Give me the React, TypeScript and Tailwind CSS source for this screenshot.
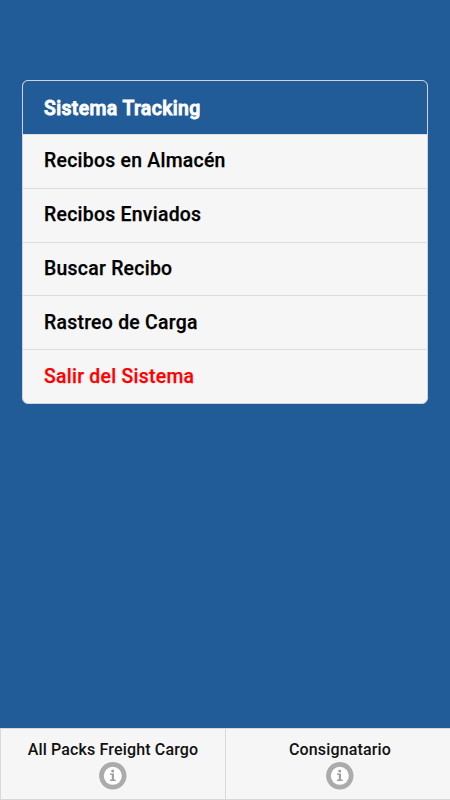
import clsx from "clsx";

const items = [
  { label: "Recibos en Almacén" },
  { label: "Recibos Enviados" },
  { label: "Buscar Recibo" },
  { label: "Rastreo de Carga" },
  { label: "Salir del Sistema", danger: true },
];

const tabs = ["All Packs Freight Cargo", "Consignatario"];

function InfoIcon() {
  return (
    <svg width="28" height="28" viewBox="0 0 28 28">
      <circle cx="13.8" cy="13.8" r="13.7" fill="#ababab" />
      <circle cx="13.8" cy="13.8" r="9" fill="#fff" />
      <circle cx="13.7" cy="9.1" r="1.5" fill="#a0a0a0" />
      <path
        d="M11 11.6h4v6h1.7v1.4H11v-1.4h1.8V13H11z"
        fill="#a0a0a0"
      />
    </svg>
  );
}

export default function App() {
  return (
    <div className="flex h-screen flex-col justify-between overflow-hidden bg-[#215c99] font-[Roboto,sans-serif] text-black">
      <ul className="mx-[22px] mt-20 h-[324px] overflow-hidden rounded-[6px] border border-[#d0d3d8] bg-[#f6f6f6] text-[19.4px] font-medium tracking-[0.27px] [-webkit-text-stroke:0.25px_currentColor]">
        <li className="flex h-[53px] items-center bg-[#215c99] px-[21px] pt-[2px] tracking-[0.4px] text-white [-webkit-text-stroke:0.9px_white]">
          Sistema Tracking
        </li>
        {items.map(({ label, danger }) => (
          <li
            key={label}
            className={clsx(
              "flex h-[53.8px] items-center border-t border-[#dddddd] px-[21px] pb-px",
              danger && "text-[#ff0000]",
            )}
          >
            {label}
          </li>
        ))}
      </ul>
      <nav className="-mr-[6px] grid h-[72px] grid-cols-[225px_1fr] border border-[#d8d8d8] bg-[#f6f6f6]">
        {tabs.map((tab) => (
          <div
            key={tab}
            className="flex flex-col items-center border-r border-[#d8d8d8] pt-[11px] text-base leading-5 font-medium tracking-[0.15px] text-[#111111]"
          >
            {tab}
            <div className="mt-[2px]">
              <InfoIcon />
            </div>
          </div>
        ))}
      </nav>
    </div>
  );
}
